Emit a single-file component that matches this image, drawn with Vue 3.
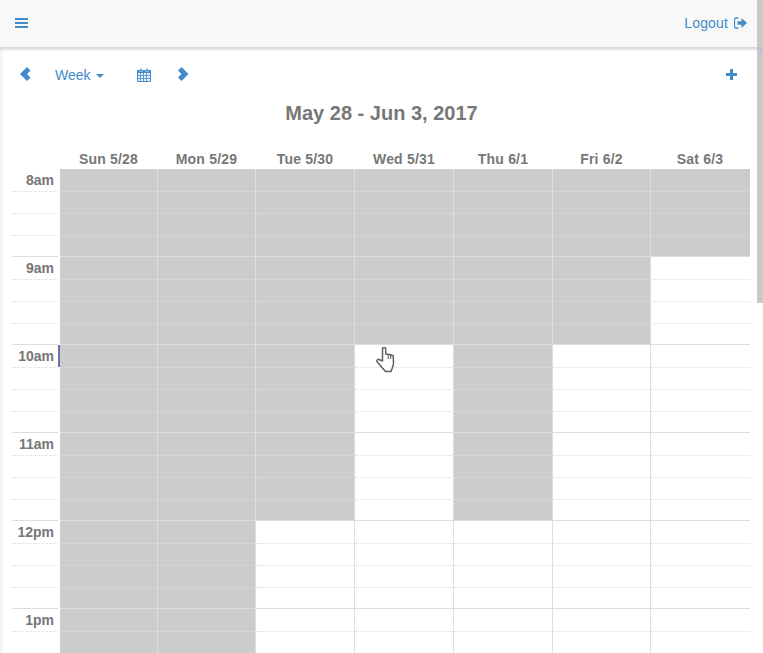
<script setup>
const hours = ['8am', '9am', '10am', '11am', '12pm', '1pm']
const days = [
  { label: 'Sun 5/28', busy: 24 },
  { label: 'Mon 5/29', busy: 24 },
  { label: 'Tue 5/30', busy: 16 },
  { label: 'Wed 5/31', busy: 8 },
  { label: 'Thu 6/1', busy: 16 },
  { label: 'Fri 6/2', busy: 8 },
  { label: 'Sat 6/3', busy: 4 }
]
const slots = Array.from({ length: 24 }, (_, i) => i)
</script>

<template>
  <div class="page">
    <header class="nav">
      <a class="menu" aria-label="Menu">
        <svg width="13" height="10" viewBox="0 0 13 10"><path d="M0 0h13v2H0zM0 4h13v2H0zM0 8h13v2H0z" fill="#428bca" /></svg>
      </a>
      <a class="logout">Logout
        <svg width="13" height="12" viewBox="0 0 13 12"><path d="M4.500 1H2.200C1 1 .5 1.700 .5 2.600v6.800C.5 10.300 1 11 2.200 11h2.300" fill="none" stroke="#428bca" stroke-width="1.300" /><path d="M3.500 4.200H7.500V1L13 6l-5.500 5V7.800H3.500z" fill="#428bca" /></svg>
      </a>
    </header>

    <main class="content">
      <div class="toolbar">
        <svg class="prev" width="11" height="14" viewBox="0 0 11 14"><path d="M7 0l3.500 3.500L7 7l3.500 3.500L7 14 0 7z" fill="#428bca" /></svg>
        <a class="view">Week<span class="caret"></span></a>
        <svg class="cal" width="14" height="14" viewBox="0 0 14 14">
          <path d="M0.500 2.500h13v11h-13z" fill="#eaf2f9" stroke="#428bca" />
          <path d="M0 2h14v3H0z" fill="#428bca" />
          <path d="M3 0.500h2v3H3zM9 0.500h2v3H9z" fill="#428bca" stroke="#fff" stroke-width=".4" />
          <path d="M3.500 5v8M6.500 5v8M9.500 5v8M1 7.500h12M1 10.500h12" stroke="#428bca" stroke-width="1" fill="none" opacity=".8" />
        </svg>
        <svg class="next" width="11" height="14" viewBox="0 0 11 14"><path d="M3.500 0L0 3.500 3.500 7 0 10.500 3.500 14l7-7z" fill="#428bca" /></svg>
        <svg class="plus" width="11" height="11" viewBox="0 0 11 11"><path d="M4 0h3v4h4v3H7v4H4V7H0V4h4z" fill="#428bca" /></svg>
      </div>

      <h1 class="title">May 28 - Jun 3, 2017</h1>

      <div class="calendar">
        <div class="corner"></div>
        <div v-for="d in days" :key="d.label" class="day-head">{{ d.label }}</div>

        <div class="gutter">
          <div v-for="(h, hi) in hours" :key="h" class="gutter-hour">
            <div class="slot hour-start" :class="{ current: h === '10am', first: hi === 0 }"><span class="hour-label">{{ h }}</span></div>
            <div class="slot s2"></div>
            <div class="slot s3"></div>
            <div class="slot s4"></div>
          </div>
        </div>

        <div v-for="d in days" :key="d.label + '-col'" class="day-col">
          <div
            v-for="s in slots"
            :key="s"
            class="slot"
            :class="{
              busy: s < d.busy,
              'hour-start': s % 4 === 0,
              first: s === 0,
              s2: s % 4 === 1,
              s3: s % 4 === 2,
              s4: s % 4 === 3
            }"
          ></div>
        </div>
      </div>
    </main>

    <svg class="hand" width="19" height="26" viewBox="0 0 19 26">
      <path d="M6.500 14V2a1.600 1.600 0 0 1 3.200 0v5l2.500.300 2.500.500 2.500 1 .3 7.200c0 3-1.300 5-2.500 8.500H9.500L6 20.500 1 14.500c-.6-1 .6-2.600 2-2z" fill="#fff" stroke="#5f6068" stroke-width="1.500" stroke-linejoin="round" />
      <path d="M12.200 7.300V12M14.700 7.800V12" stroke="#5f6068" stroke-width="1.100" fill="none" />
    </svg>
    <div class="scroll-thumb"></div>
    <div class="scroll-mark"></div>
  </div>
</template>

<style scoped>
.page {
  position: relative;
  width: 763px;
  height: 653px;
  overflow: hidden;
  background: #fff;
  font-family: "Liberation Sans", Arial, sans-serif;
  font-size: 14px;
  color: #777;
}
.nav {
  position: relative;
  z-index: 2;
  box-sizing: border-box;
  height: 48px;
  padding: 0 16px 1px 15px;
  display: flex;
  align-items: center;
  justify-content: space-between;
  background: #f8f8f8;
  border-bottom: 1px solid #d8d8d8;
  box-shadow: 0 1px 3px rgba(0, 0, 0, 0.2);
}
.menu {
  display: flex;
}
.logout {
  display: flex;
  align-items: center;
  gap: 6px;
  color: #428bca;
  font-size: 14px;
  letter-spacing: 0.15px;
}
.content {
  box-shadow: inset 4px 0 4px -3px rgba(0, 0, 0, 0.1);
  height: 605px;
}
.toolbar {
  box-sizing: border-box;
  height: 54px;
  padding: 0 26px 0 20px;
  display: flex;
  align-items: center;
}
.prev,
.next {
  margin-top: -2px;
}
.view {
  margin-left: 24px;
  color: #428bca;
  display: flex;
  align-items: center;
}
.caret {
  margin-left: 5px;
  margin-top: 2px;
  border-top: 4px solid #428bca;
  border-left: 4px solid transparent;
  border-right: 4px solid transparent;
}
.cal {
  margin-left: 33px;
}
.next {
  margin-left: 27px;
}
.plus {
  margin-left: auto;
  margin-top: -2px;
}
.title {
  margin: 0;
  height: 49px;
  line-height: 22px;
  font-size: 20px;
  font-weight: 700;
  text-align: center;
  color: #777;
}
.calendar {
  margin-left: 12px;
  width: 738px;
  display: grid;
  grid-template-columns: 48px 98px 98px 99px 99px 99px 98px 99px;
}
.day-head {
  height: 18px;
  line-height: 17px;
  padding-right: 1px;
  font-size: 14px;
  font-weight: 700;
  letter-spacing: 0.2px;
  text-align: center;
  color: #777;
}
.gutter {
  margin-right: 2px;
}
.day-col {
  border-right: 1px solid #ddd;
}
.day-col:last-child {
  border-right: 0;
}
.slot {
  box-sizing: border-box;
  height: 22px;
  border-top: 1px dotted #ddd;
}
.slot.hour-start {
  height: 23px;
  border-top: 1px solid #ddd;
}
.slot.hour-start.first {
  height: 22px;
  border-top: 0;
}
.slot.s4 {
  height: 21px;
}
.slot.busy {
  background: #ccc;
}
.hour-label {
  display: block;
  padding-right: 4px;
  line-height: 23px;
  text-align: right;
  font-weight: 700;
  color: #777;
}
.current {
  position: relative;
}
.current::after {
  content: "";
  position: absolute;
  right: -2px;
  top: 0;
  width: 2px;
  height: 22px;
  background: #6b76a3;
}
.hand {
  position: absolute;
  left: 376px;
  top: 347px;
}
.scroll-thumb {
  position: absolute;
  right: 0;
  top: 0;
  width: 6px;
  height: 303px;
  background: #c8c8c8;
  z-index: 3;
}
.scroll-mark {
  position: absolute;
  right: 0;
  top: 48px;
  width: 6px;
  height: 1px;
  background: #a9bdd6;
  z-index: 4;
}
</style>

<style>
html, body {
  margin: 0;
  overflow: hidden;
}
</style>
